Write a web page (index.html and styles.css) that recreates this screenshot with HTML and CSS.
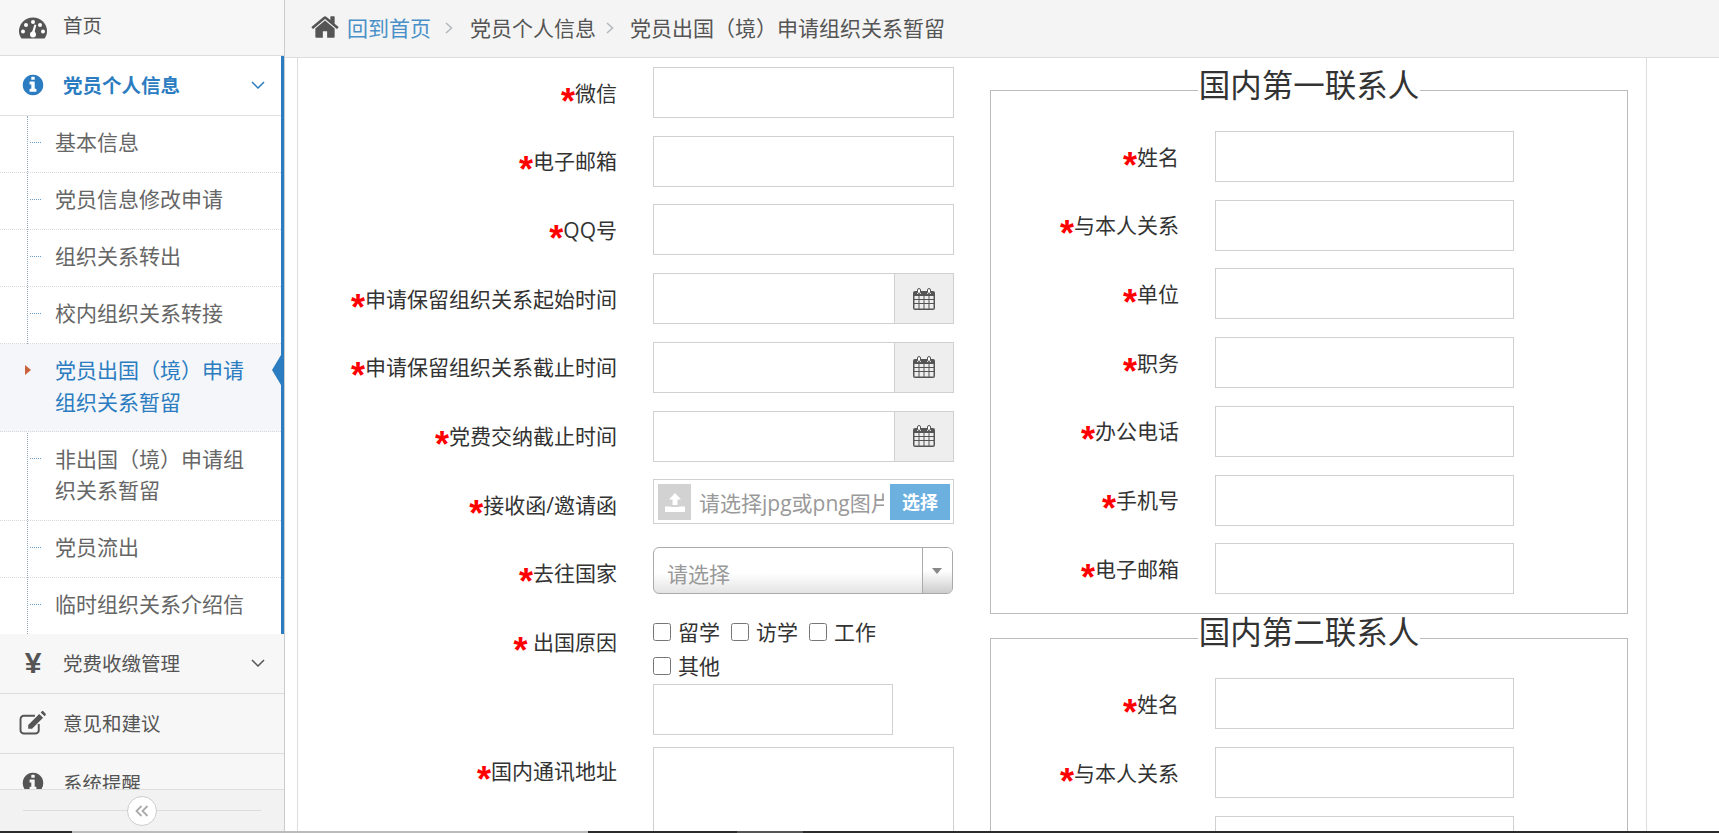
FILE: index.html
```html
<!DOCTYPE html>
<html lang="zh-CN">
<head>
    <meta charset="UTF-8">
    <title>党员出国（境）申请组织关系暂留</title>
    <link rel="stylesheet" href="styles.css">
</head>
<body>

<div class="page">
    <aside class="sidebar">
        <nav class="sidebar__nav">
            <a class="menu menu--home">
                <svg class="menu__icon" viewBox="0 0 28 21"><path fill="#555" d="M2.500 21C.8 18.500 0 16.500 0 14a14 14 0 0 1 28 0c0 2.500-.8 4.500-2.500 7z"/><g fill="#fff"><circle cx="4" cy="14" r="2"/><circle cx="7" cy="7.500" r="2"/><circle cx="14" cy="4.500" r="2"/><circle cx="21" cy="7.500" r="2"/><circle cx="24" cy="14" r="2"/><circle cx="14" cy="17" r="3"/><path d="M12.500 16l3-9 1.800.6-2.300 9.400z"/></g></svg>
                <span class="menu__text">首页</span>
            </a>
            <div class="group">
                <a class="menu menu--open">
                    <svg class="menu__icon" viewBox="0 0 1792 1792"><path fill="#2b7cc0" d="M1152 1376v-160q0-14-9-23t-23-9h-96v-512q0-14-9-23t-23-9h-320q-14 0-23 9t-9 23v160q0 14 9 23t23 9h96v320h-96q-14 0-23 9t-9 23v160q0 14 9 23t23 9h448q14 0 23-9t9-23zm-128-896v-160q0-14-9-23t-23-9h-192q-14 0-23 9t-9 23v160q0 14 9 23t23 9h192q14 0 23-9t9-23zm640 416q0 209-103 385.500t-279.500 279.500-385.500 103-385.500-103-279.500-279.500-103-385.500 103-385.500 279.500-279.500 385.500-103 385.500 103 279.500 279.500 103 385.500z"/></svg>
                    <span class="menu__text">党员个人信息</span>
                    <svg class="menu__arrow" viewBox="0 0 14 8"><path d="M1 1l6 6 6-6" fill="none" stroke="#2b7cc0" stroke-width="1.500"/></svg>
                </a>
                <ul class="submenu">
                    <li class="submenu__item">基本信息</li>
                    <li class="submenu__item">党员信息修改申请</li>
                    <li class="submenu__item">组织关系转出</li>
                    <li class="submenu__item">校内组织关系转接</li>
                    <li class="submenu__item submenu__item--active">党员出国（境）申请组织关系暂留</li>
                    <li class="submenu__item">非出国（境）申请组织关系暂留</li>
                    <li class="submenu__item">党员流出</li>
                    <li class="submenu__item">临时组织关系介绍信</li>
                </ul>
            </div>
            <a class="menu">
                <span class="menu__icon menu__icon--yen">¥</span>
                <span class="menu__text">党费收缴管理</span>
                <svg class="menu__arrow" viewBox="0 0 14 8"><path d="M1 1l6 6 6-6" fill="none" stroke="#555" stroke-width="1.500"/></svg>
            </a>
            <a class="menu">
                <svg class="menu__icon" viewBox="0 0 28 25"><path d="M20 13.500V20a3.500 3.500 0 0 1-3.500 3.500h-12A3.500 3.500 0 0 1 1 20V8.500A3.500 3.500 0 0 1 4.500 5H16" fill="none" stroke="#555" stroke-width="2"/><path fill="#555" d="M9 14.500L20.500 3l4 4L13 18.500H9zM22 1.500l1-1c.6-.5 1.400-.5 2 0l2 2c.5.6.5 1.400 0 2l-1 1z"/></svg>
                <span class="menu__text">意见和建议</span>
            </a>
            <a class="menu">
                <svg class="menu__icon" viewBox="0 0 1792 1792"><path fill="#555" d="M1152 1376v-160q0-14-9-23t-23-9h-96v-512q0-14-9-23t-23-9h-320q-14 0-23 9t-9 23v160q0 14 9 23t23 9h96v320h-96q-14 0-23 9t-9 23v160q0 14 9 23t23 9h448q14 0 23-9t9-23zm-128-896v-160q0-14-9-23t-23-9h-192q-14 0-23 9t-9 23v160q0 14 9 23t23 9h192q14 0 23-9t9-23zm640 416q0 209-103 385.500t-279.500 279.500-385.500 103-385.500-103-279.500-279.500-103-385.500 103-385.500 279.500-279.500 385.500-103 385.500 103 279.500 279.500 103 385.500z"/></svg>
                <span class="menu__text">系统提醒</span>
            </a>
        </nav>
        <div class="sidebar__footer">
            <button class="sidebar__toggle">
                <svg viewBox="0 0 14 12" width="14" height="12"><path d="M6.500 1L1.500 6l5 5M12.500 1l-5 5 5 5" fill="none" stroke="#aaa" stroke-width="1.800"/></svg>
            </button>
        </div>
    </aside>

    <main class="main">
        <div class="crumbs">
            <svg class="crumbs__home" viewBox="0 0 1792 1792"><path fill="#555" d="M1472 992v480q0 26-19 45t-45 19h-384v-384h-256v384h-384q-26 0-45-19t-19-45v-480q0-1 .5-3t.5-3l575-474 575 474q1 2 1 6zm223-69l-62 74q-8 9-21 11h-3q-13 0-21-7l-692-577-692 577q-12 8-24 7-13-2-21-11l-62-74q-8-10-7-23.500t11-21.500l719-599q32-26 76-26t76 26l244 204v-195q0-14 9-23t23-9h192q14 0 23 9t9 23v408l219 182q10 8 11 21.500t-7 23.500z"/></svg>
            <a class="crumbs__link">回到首页</a>
            <svg class="crumbs__sep" viewBox="0 0 8 12"><path d="M1 1l5.500 5L1 11" fill="none" stroke="#b4b8bc" stroke-width="1.500"/></svg>
            <span>党员个人信息</span>
            <svg class="crumbs__sep crumbs__sep--last" viewBox="0 0 8 12"><path d="M1 1l5.500 5L1 11" fill="none" stroke="#b4b8bc" stroke-width="1.500"/></svg>
            <span>党员出国（境）申请组织关系暂留</span>
        </div>

        <div class="panel">
            <div class="form-left">
                <div class="field">
                    <label class="field__label"><span class="req">*</span>微信</label>
                    <input class="field__input" type="text">
                </div>
                <div class="field">
                    <label class="field__label"><span class="req">*</span>电子邮箱</label>
                    <input class="field__input" type="text">
                </div>
                <div class="field">
                    <label class="field__label"><span class="req">*</span>QQ号</label>
                    <input class="field__input" type="text">
                </div>
                <div class="field">
                    <label class="field__label"><span class="req">*</span>申请保留组织关系起始时间</label>
                    <div class="date">
                        <input class="date__input" type="text">
                        <span class="date__addon"><svg class="cal" viewBox="0 0 22 22"><use href="#cal"/></svg></span>
                    </div>
                </div>
                <div class="field">
                    <label class="field__label"><span class="req">*</span>申请保留组织关系截止时间</label>
                    <div class="date">
                        <input class="date__input" type="text">
                        <span class="date__addon"><svg class="cal" viewBox="0 0 22 22"><use href="#cal"/></svg></span>
                    </div>
                </div>
                <div class="field">
                    <label class="field__label"><span class="req">*</span>党费交纳截止时间</label>
                    <div class="date">
                        <input class="date__input" type="text">
                        <span class="date__addon"><svg class="cal" viewBox="0 0 22 22"><use href="#cal"/></svg></span>
                    </div>
                </div>
                <div class="field field--file">
                    <label class="field__label"><span class="req">*</span>接收函/邀请函</label>
                    <div class="file">
                        <span class="file__icon">
                            <svg viewBox="0 0 20 20" width="20" height="20"><path fill="#fff" d="M10 1l6 6.500h-3.500V13h-5V7.500H4zM0 14.500h6V15h8v-.5h6V20H0z"/></svg>
                        </span>
                        <span class="file__text">请选择jpg或png图片文件</span>
                        <span class="file__btn">选择</span>
                    </div>
                </div>
                <div class="field field--select">
                    <label class="field__label"><span class="req">*</span>去往国家</label>
                    <div class="select">
                        <span class="select__text">请选择</span>
                        <span class="select__arrow"></span>
                    </div>
                </div>
                <div class="field field--reason">
                    <label class="field__label field__label--top"><span class="req">*</span>&nbsp;出国原因</label>
                    <div class="reason">
                        <div class="reason__row">
                            <label class="check"><input type="checkbox">留学</label>
                            <label class="check"><input type="checkbox">访学</label>
                            <label class="check"><input type="checkbox">工作</label>
                        </div>
                        <div class="reason__row">
                            <label class="check"><input type="checkbox">其他</label>
                        </div>
                        <input class="field__input field__input--other" type="text">
                    </div>
                </div>
                <div class="field field--address">
                    <label class="field__label field__label--top"><span class="req">*</span>国内通讯地址</label>
                    <textarea class="field__area"></textarea>
                </div>
            </div>

            <div class="form-right">
                <fieldset class="contact">
                    <legend class="contact__title">国内第一联系人</legend>
                    <div class="field field--contact">
                        <label class="field__label"><span class="req">*</span>姓名</label>
                        <input class="field__input" type="text">
                    </div>
                    <div class="field field--contact">
                        <label class="field__label"><span class="req">*</span>与本人关系</label>
                        <input class="field__input" type="text">
                    </div>
                    <div class="field field--contact">
                        <label class="field__label"><span class="req">*</span>单位</label>
                        <input class="field__input" type="text">
                    </div>
                    <div class="field field--contact">
                        <label class="field__label"><span class="req">*</span>职务</label>
                        <input class="field__input" type="text">
                    </div>
                    <div class="field field--contact">
                        <label class="field__label"><span class="req">*</span>办公电话</label>
                        <input class="field__input" type="text">
                    </div>
                    <div class="field field--contact">
                        <label class="field__label"><span class="req">*</span>手机号</label>
                        <input class="field__input" type="text">
                    </div>
                    <div class="field field--contact">
                        <label class="field__label"><span class="req">*</span>电子邮箱</label>
                        <input class="field__input" type="text">
                    </div>
                </fieldset>
                <fieldset class="contact">
                    <legend class="contact__title">国内第二联系人</legend>
                    <div class="field field--contact">
                        <label class="field__label"><span class="req">*</span>姓名</label>
                        <input class="field__input" type="text">
                    </div>
                    <div class="field field--contact">
                        <label class="field__label"><span class="req">*</span>与本人关系</label>
                        <input class="field__input" type="text">
                    </div>
                    <div class="field field--contact">
                        <label class="field__label"><span class="req">*</span>单位</label>
                        <input class="field__input" type="text">
                    </div>
                </fieldset>
            </div>
        </div>
    </main>
</div>

<div class="hscroll">
    <span class="hscroll__seg hscroll__seg--a"></span>
    <span class="hscroll__seg hscroll__seg--b"></span>
    <span class="hscroll__seg hscroll__seg--c"></span>
    <span class="hscroll__seg hscroll__seg--d"></span>
    <span class="hscroll__seg hscroll__seg--e"></span>
</div>

<svg class="defs" width="0" height="0">
    <symbol id="cal" viewBox="0 0 22 22">
        <path fill="#555" d="M2 3h2v3h4V3h6v3h4V3h2a2 2 0 0 1 2 2v15a2 2 0 0 1-2 2H2a2 2 0 0 1-2-2V5a2 2 0 0 1 2-2z"/>
        <rect x="4.500" y=".5" width="3" height="5" rx="1.500" fill="#fff" stroke="#555"/>
        <rect x="14.500" y=".5" width="3" height="5" rx="1.500" fill="#fff" stroke="#555"/>
        <path fill="#eee" d="M1.500 8h4v3h-4zM6.500 8h4v3h-4zM11.500 8h4v3h-4zM16.500 8h4v3h-4zM1.500 12h4v3h-4zM6.500 12h4v3h-4zM11.500 12h4v3h-4zM16.500 12h4v3h-4zM1.500 16h4v4.500h-4zM6.500 16h4v4.500h-4zM11.500 16h4v4.500h-4zM16.500 16h4v4.500h-4z"/>
    </symbol>
</svg>

</body>
</html>
```

FILE: styles.css
```css
* {
    box-sizing: border-box;
    margin: 0;
    padding: 0;
}

html, body {
    height: 100%;
    overflow: hidden;
}

body {
    background: #fff;
    color: #333;
    font-family: "Open Sans", "Noto Sans CJK SC", sans-serif;
    font-size: 21px;
    display: flex;
    flex-direction: column;
}

.defs {
    position: absolute;
}

.page {
    display: flex;
    flex: 1;
    min-height: 0;
}

/* sidebar */
.sidebar {
    width: 285px;
    flex: none;
    display: flex;
    flex-direction: column;
    background: #f7f7f7;
    border-right: 1px solid #ccc;
}
.sidebar__nav {
    flex: 1;
    min-height: 0;
    overflow: hidden;
}
.sidebar__footer {
    height: 42px;
    flex: none;
    display: flex;
    align-items: center;
    justify-content: center;
    background: #f2f2f2;
    border-top: 1px solid #ddd;
    position: relative;
}
.sidebar__footer::before {
    content: "";
    position: absolute;
    left: 23px;
    right: 23px;
    top: 20px;
    border-top: 1px solid #ddd;
}
.sidebar__toggle {
    width: 30px;
    height: 30px;
    border-radius: 50%;
    border: 1px solid #ccc;
    background: #fff;
    display: flex;
    align-items: center;
    justify-content: center;
    position: relative;
}

.menu {
    display: flex;
    align-items: center;
    height: 60px;
    padding-left: 19px;
    padding-bottom: 2px;
    color: #555;
    font-size: 19.500px;
    border-bottom: 1px solid #ddd;
}
.menu--home {
    height: 56px;
    padding-bottom: 6px;
}
.menu--home .menu__icon {
    margin-top: 6px;
}
.menu__icon {
    width: 28px;
    height: 24px;
    flex: none;
}
.menu__icon--yen {
    font-family: "Liberation Sans", sans-serif;
    font-weight: bold;
    font-size: 30px;
    line-height: 24px;
    text-align: center;
}
.menu__text {
    margin-left: 16px;
    flex: 1;
}
.menu__arrow {
    width: 14px;
    height: 8px;
    margin-right: 19px;
}
.menu--open {
    color: #2b7cc0;
    font-weight: bold;
    background: #fff;
    border-bottom-color: #e2e2e2;
}
.menu--open .menu__arrow {
    margin-right: 16px;
}

.group {
    border-right: 3px solid #2b7cc0;
}
.submenu {
    list-style: none;
    background: #fff;
    position: relative;
}
.submenu::before {
    content: "";
    position: absolute;
    left: 27px;
    top: 0;
    bottom: 0;
    border-left: 1px dotted #8aa8c4;
}
.submenu__item {
    position: relative;
    padding: 11.100px 30px 13.100px 55px;
    line-height: 31.750px;
    color: #666;
    border-bottom: 1px dotted #d8d8d8;
}
.submenu__item:last-child {
    border-bottom: none;
}
.submenu__item::before {
    content: "";
    position: absolute;
    left: 30px;
    top: 26px;
    width: 11px;
    border-top: 1px dotted #6a9cc8;
}
.submenu__item--active {
    color: #2b7cc0;
    background: #f4f6fa;
}
.submenu__item--active::before {
    left: 25px;
    top: 21px;
    width: 0;
    border-top: 5.500px solid transparent;
    border-bottom: 5.500px solid transparent;
    border-left: 6px solid #c8623a;
}
.submenu__item--active::after {
    content: "";
    position: absolute;
    right: 0;
    top: 11px;
    border-top: 15px solid transparent;
    border-bottom: 15px solid transparent;
    border-right: 9px solid #2b7cc0;
}

/* breadcrumb */
.main {
    flex: 1;
    min-width: 0;
    display: flex;
    flex-direction: column;
}
.crumbs {
    height: 58px;
    flex: none;
    display: flex;
    align-items: center;
    padding-left: 25px;
    padding-bottom: 4px;
    background: #f4f4f4;
    border-bottom: 1px solid #ddd;
    color: #555;
    white-space: nowrap;
}
.crumbs__home {
    width: 30px;
    height: 30px;
    margin-right: 7px;
}
.crumbs__link {
    color: #4a90c8;
}
.crumbs__sep {
    width: 8px;
    height: 12px;
    margin: 2px 17px 0 14px;
}
.crumbs__sep--last {
    margin: 2px 16px 0 10px;
}

/* form panel */
.panel {
    flex: 1;
    min-height: 0;
    overflow: hidden;
    margin: 0 72px 0 12px;
    border-left: 1px solid #ddd;
    border-right: 1px solid #ddd;
    display: grid;
    grid-template-columns: 692px 638px;
    align-items: start;
}
.form-left {
    padding-top: 9px;
}
.form-right {
    padding-top: 11px;
}

.field {
    display: grid;
    grid-template-columns: 319px 301px;
    column-gap: 36px;
    align-items: center;
    margin-bottom: 17.720px;
}
.field--contact {
    grid-template-columns: 188px 299px;
    column-gap: 36px;
}
.field__label {
    text-align: right;
    white-space: nowrap;
    color: #333;
    line-height: 30px;
}
.field__label--top {
    align-self: start;
}
.req {
    color: #f00;
    font-family: "Liberation Sans", sans-serif;
    font-weight: bold;
    font-size: 36px;
    line-height: 0;
    vertical-align: -13px;
}
.field__input {
    display: block;
    width: 100%;
    height: 51px;
    border: 1px solid #d0d0d0;
    background: #fff;
    outline: none;
}
.field__input--other {
    width: 240px;
    margin-top: .5px;
}
.field__area {
    display: block;
    width: 100%;
    height: 200px;
    border: 1px solid #d0d0d0;
    resize: none;
}

.date {
    display: flex;
    height: 51px;
    border: 1px solid #d0d0d0;
}
.date__input {
    flex: 1;
    min-width: 0;
    border: none;
    outline: none;
}
.date__addon {
    width: 59px;
    flex: none;
    display: flex;
    align-items: center;
    justify-content: center;
    background: #eee;
    border-left: 1px solid #d0d0d0;
}
.cal {
    width: 22px;
    height: 22px;
}

.field--file {
    margin-top: .6px;
    margin-bottom: 23px;
}
.field--file .field__label {
    margin-top: 6px;
}
.file {
    display: flex;
    align-items: center;
    height: 45px;
    padding: 0 3px 0 4px;
    border: 1px solid #d0d0d0;
    overflow: hidden;
}
.file__icon {
    width: 33px;
    height: 36px;
    flex: none;
    background: #d2d2d2;
    display: flex;
    align-items: center;
    justify-content: center;
}
.file__text {
    flex: 1;
    min-width: 0;
    margin: 0 6px 0 8px;
    overflow: hidden;
    white-space: nowrap;
    color: #999;
}
.file__btn {
    width: 60px;
    height: 36px;
    flex: none;
    background: #6cb0e0;
    color: #fff;
    font-size: 18px;
    font-weight: bold;
    text-align: center;
    line-height: 36px;
}

.field--select {
    margin-bottom: 17px;
}
.field--select .field__label {
    margin-top: 4px;
}
.select {
    display: flex;
    align-items: center;
    height: 47px;
    width: 300px;
    border: 1px solid #aaa;
    border-radius: 6px;
    background: linear-gradient(#fff 55%, #e4e4e4);
    overflow: hidden;
}
.select__text {
    flex: 1;
    padding-left: 13px;
    padding-top: 4px;
    color: #999;
}
.select__arrow {
    width: 30px;
    height: 100%;
    flex: none;
    border-left: 1px solid #aaa;
    background: linear-gradient(#fff 50%, #ccc);
    position: relative;
}
.select__arrow::after {
    content: "";
    position: absolute;
    left: 9px;
    top: 20px;
    border-left: 5.500px solid transparent;
    border-right: 5.500px solid transparent;
    border-top: 6px solid #888;
}

.field--reason {
    align-items: start;
    margin-bottom: 12px;
}
.field--reason .field__label {
    margin-top: 16px;
}
.reason__row {
    display: flex;
    gap: 11px;
    height: 34.500px;
    align-items: center;
}
.reason__row:first-child {
    margin-top: 3px;
}
.check {
    display: flex;
    align-items: center;
    gap: 7px;
    line-height: 30px;
}
.check input {
    width: 18px;
    height: 18px;
    margin: 0;
}
.field--address {
    align-items: start;
}
.field--address .field__label {
    margin-top: 9px;
}

/* contact boxes */
.contact {
    border: 1px solid #bbb;
    padding: 18.500px 0 0;
    margin: 0 0 2px;
    min-width: 0;
}
.contact .field:last-child {
    margin-bottom: 19px;
}
.contact__title {
    margin: 0 auto;
    padding: 0 1px 12px;
    font-size: 31.500px;
    line-height: 31.500px;
    font-weight: 400;
    color: #333;
}

/* bottom scroll strip */
.hscroll {
    height: 2px;
    flex: none;
    display: flex;
    background: #2b2b2b;
}
.hscroll__seg--a {
    width: 72px;
}
.hscroll__seg--b {
    width: 516px;
    background: #bbb;
}
.hscroll__seg--c {
    width: 149px;
}
.hscroll__seg--d {
    width: 66px;
    background: #555;
}
```
